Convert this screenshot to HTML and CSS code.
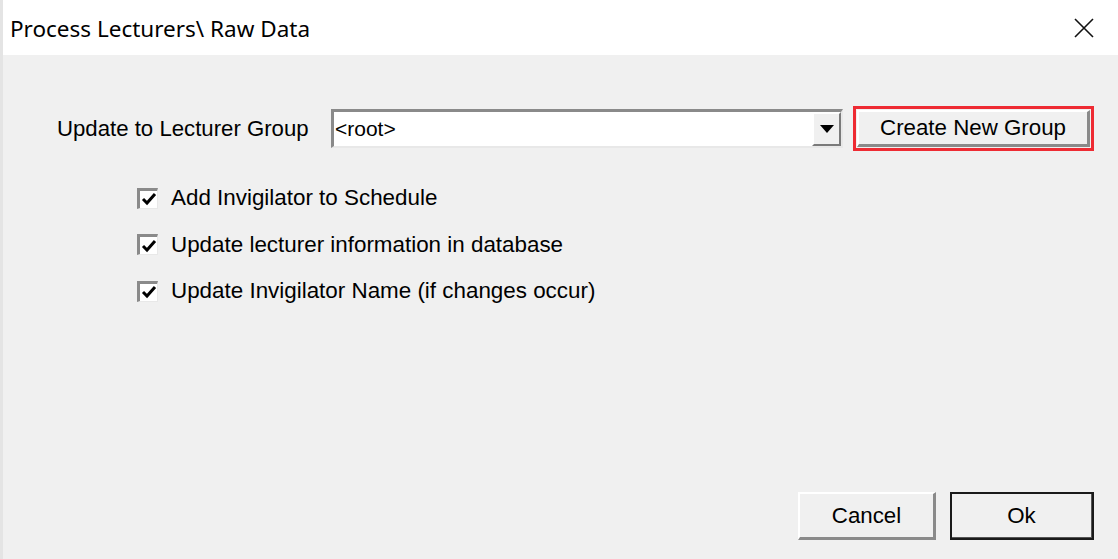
FILE: index.html
```html
<!DOCTYPE html>
<html lang="en">
<head>
<meta charset="UTF-8">
<meta name="viewport" content="width=device-width, initial-scale=1.0">
<title>Process Lecturers\ Raw Data</title>
<link rel="stylesheet" href="styles.css">
</head>
<body>
  <div class="dialog">
    <div class="titlebar">
      <span class="title">Process Lecturers\ Raw Data</span>
      <span class="close">
        <svg width="20" height="20" viewBox="0 0 20 20">
          <path d="M1 1 L19 19 M19 1 L1 19" stroke="#111" stroke-width="1.6" fill="none"/>
        </svg>
      </span>
    </div>

    <div class="content">
      <div class="group-row">
        <span class="label">Update to Lecturer Group</span>
        <div class="combo">
          <span class="combo-value">&lt;root&gt;</span>
          <span class="combo-btn">
            <svg width="14" height="8" viewBox="0 0 14 8">
              <path d="M0 0 L14 0 L7 8 Z" fill="#000"/>
            </svg>
          </span>
        </div>
        <div class="highlight">
          <button class="btn btn-wide">Create New Group</button>
        </div>
      </div>

      <div class="checklist">
        <div class="check-row">
          <span class="checkbox">
            <svg width="16" height="16" viewBox="0 0 16 16">
              <path d="M2 8 L6 12 L14 3" stroke="#000" stroke-width="3" fill="none"/>
            </svg>
          </span>
          <span>Add Invigilator to Schedule</span>
        </div>
        <div class="check-row">
          <span class="checkbox">
            <svg width="16" height="16" viewBox="0 0 16 16">
              <path d="M2 8 L6 12 L14 3" stroke="#000" stroke-width="3" fill="none"/>
            </svg>
          </span>
          <span>Update lecturer information in database</span>
        </div>
        <div class="check-row">
          <span class="checkbox">
            <svg width="16" height="16" viewBox="0 0 16 16">
              <path d="M2 8 L6 12 L14 3" stroke="#000" stroke-width="3" fill="none"/>
            </svg>
          </span>
          <span>Update Invigilator Name (if changes occur)</span>
        </div>
      </div>

      <div class="footer">
        <button class="btn btn-cancel">Cancel</button>
        <button class="btn btn-ok">Ok</button>
      </div>
    </div>
  </div>
</body>
</html>
```

FILE: styles.css
```css
html, body {
  margin: 0;
  padding: 0;
}
body {
  font-family: "Liberation Sans", Arial, sans-serif;
  font-size: 22px;
  color: #000;
  background: #f0f0f0;
}
.dialog {
  width: 1118px;
  height: 559px;
  display: flex;
  flex-direction: column;
  border-left: 3px solid #e4e4e4;
  box-sizing: border-box;
}
.titlebar {
  height: 55px;
  background: #fff;
  display: flex;
  align-items: center;
  justify-content: space-between;
  padding: 0 24px 0 7px;
  flex-shrink: 0;
}
.title {
  font-family: "Noto Sans", "Open Sans", sans-serif;
  font-size: 22.5px;
  color: #000;
  margin-top: 1px;
}
.close {
  display: flex;
}
.content {
  flex: 1;
  display: flex;
  flex-direction: column;
  padding: 51px 24px 19px 54px;
}
.group-row {
  display: flex;
  align-items: center;
  height: 45px;
}
.label {
  width: 274px;
  flex-shrink: 0;
  font-size: 22.2px;
}
.combo {
  width: 512px;
  height: 39px;
  box-sizing: border-box;
  background: #fff;
  border-top: 3px solid #8a8a8a;
  border-left: 3px solid #8a8a8a;
  border-right: 2px solid #e8e8e8;
  border-bottom: 2px solid #e8e8e8;
  display: flex;
  align-items: stretch;
}
.combo-value {
  flex: 1;
  display: flex;
  align-items: center;
  padding-left: 1px;
  font-size: 21px;
}
.combo-btn {
  width: 29px;
  background: #f0f0f0;
  border-top: 2px solid #fff;
  border-left: 2px solid #fff;
  border-right: 2px solid #7a7a7a;
  border-bottom: 2px solid #7a7a7a;
  display: flex;
  align-items: center;
  justify-content: center;
  box-sizing: border-box;
}
.highlight {
  margin-left: 10px;
  border: 3px solid #ee2b33;
  padding: 1px;
  display: flex;
}
.btn {
  font-family: "Liberation Sans", Arial, sans-serif;
  font-size: 22.3px;
  color: #000;
  background: #f0f0f0;
  border-top: 2px solid #fff;
  border-left: 2px solid #fff;
  border-right: 3px solid #8a8a8a;
  border-bottom: 3px solid #8a8a8a;
  padding: 0;
  cursor: pointer;
}
.btn-wide {
  width: 233px;
  height: 37px;
}
.checklist {
  margin-top: 24px;
  margin-left: 80px;
  display: flex;
  flex-direction: column;
  font-size: 22.4px;
}
.check-row {
  display: flex;
  align-items: center;
  height: 46.5px;
}
.checkbox {
  width: 21px;
  height: 21px;
  box-sizing: border-box;
  background: #fff;
  border-top: 3px solid #8a8a8a;
  border-left: 3px solid #8a8a8a;
  border-right: 1px solid #e8e8e8;
  border-bottom: 1px solid #e8e8e8;
  margin-right: 13px;
  display: flex;
  align-items: center;
  justify-content: center;
}
.footer {
  margin-top: auto;
  display: flex;
  justify-content: flex-end;
  gap: 14px;
}
.btn-cancel {
  width: 138px;
  height: 48px;
}
.btn-ok {
  width: 144px;
  height: 48px;
  outline: 2px solid #1a1a1a;
  outline-offset: -2px;
  border-right-color: #555;
  border-bottom-color: #555;
}
```
